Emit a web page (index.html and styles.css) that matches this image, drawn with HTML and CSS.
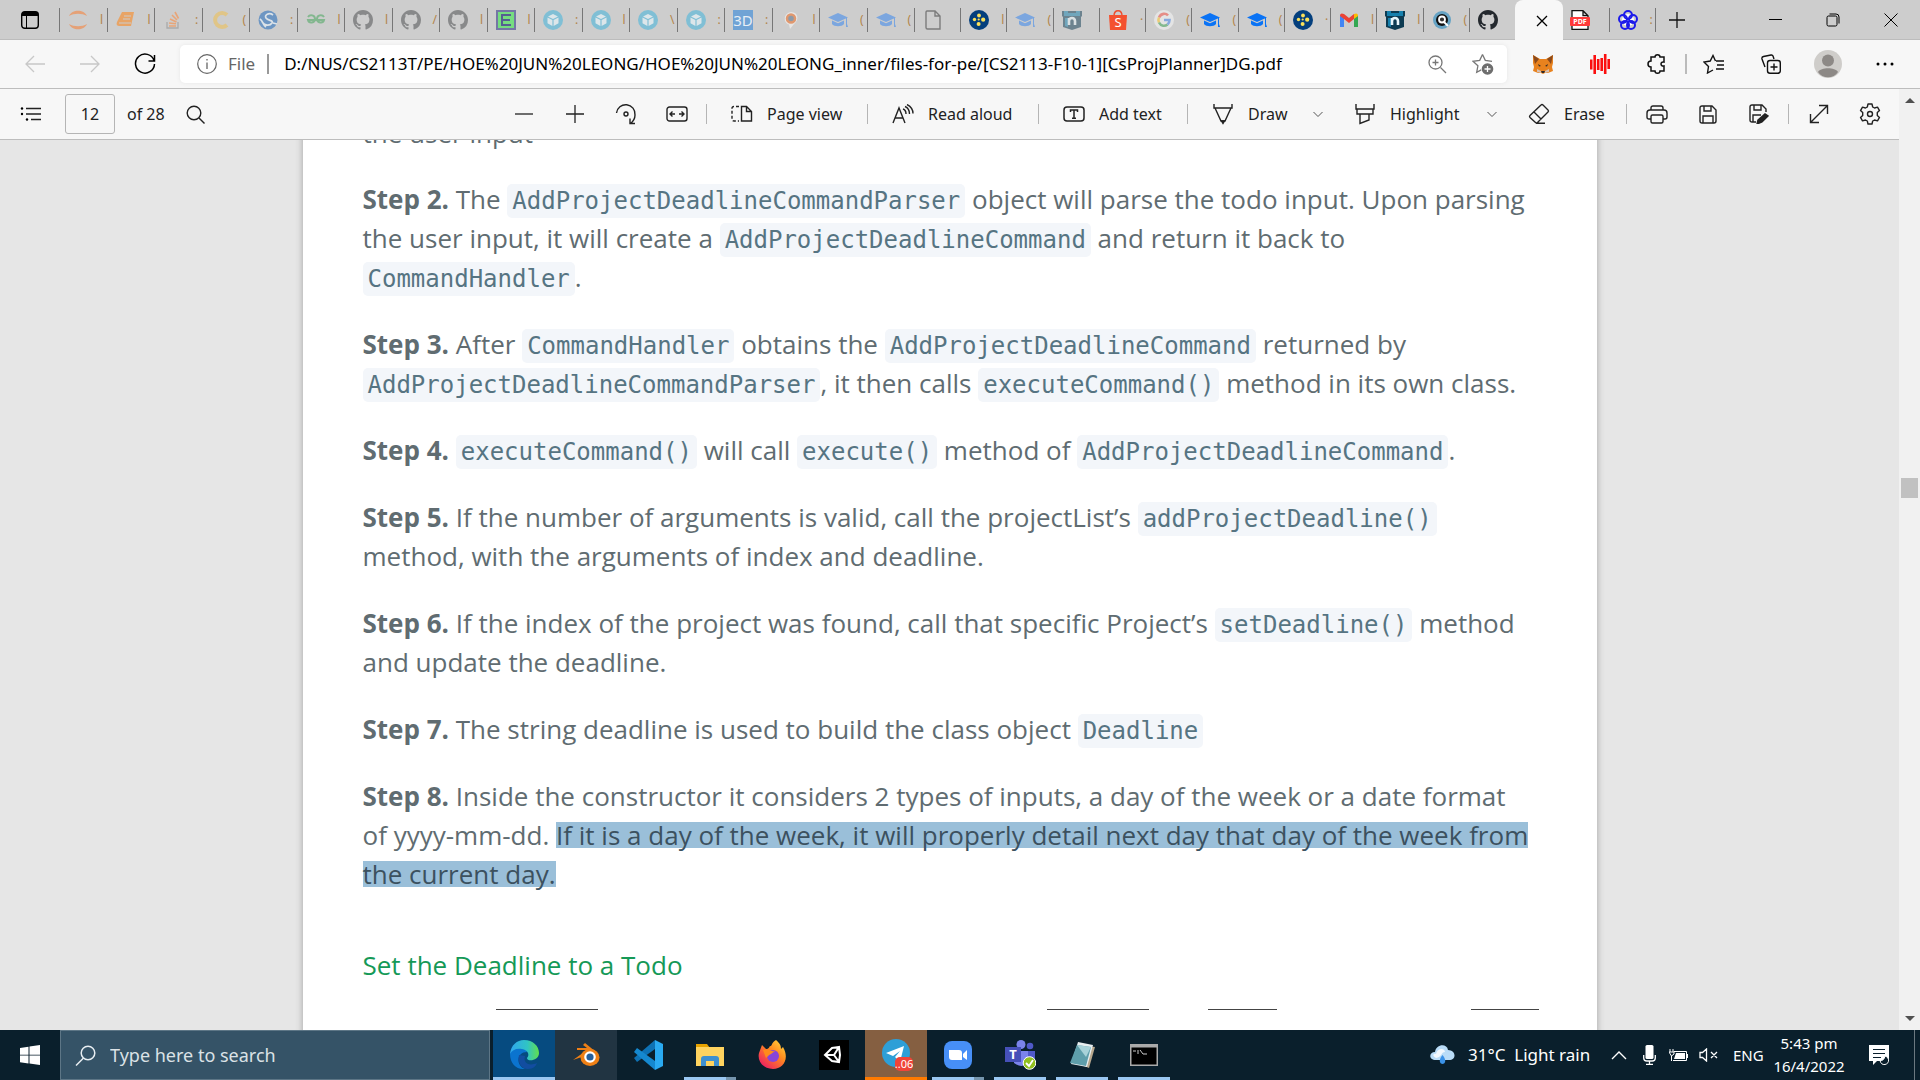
FILE: index.html
```html
<!DOCTYPE html>
<html lang="en">
<head>
<meta charset="utf-8">
<title>[CS2113-F10-1][CsProjPlanner]DG.pdf</title>
<link rel="stylesheet" href="styles.css">
</head>
<body>
<svg class="defs" aria-hidden="true">
  <symbol id="github" viewBox="0 0 16 16"><path fill="currentColor" d="M8 0C3.58 0 0 3.58 0 8c0 3.54 2.29 6.53 5.47 7.59.4.07.55-.17.55-.38 0-.19-.01-.82-.01-1.49-2.01.37-2.53-.49-2.69-.94-.09-.23-.48-.94-.82-1.13-.28-.15-.68-.52-.01-.53.63-.01 1.08.58 1.23.82.72 1.21 1.87.87 2.33.66.07-.52.28-.87.51-1.07-1.78-.2-3.64-.89-3.64-3.95 0-.87.31-1.59.82-2.15-.08-.2-.36-1.02.08-2.12 0 0 .67-.21 2.2.82.64-.18 1.32-.27 2-.27s1.36.09 2 .27c1.53-1.04 2.2-.82 2.2-.82.44 1.1.16 1.92.08 2.12.51.56.82 1.27.82 2.15 0 3.07-1.87 3.75-3.65 3.95.29.25.54.73.54 1.48 0 1.07-.01 1.93-.01 2.2 0 .21.15.46.55.38A8.01 8.01 0 0 0 16 8c0-4.42-3.58-8-8-8z"/></symbol>
  <symbol id="cube" viewBox="0 0 20 20"><circle cx="10" cy="10" r="10" fill="#80bfd5"/><path fill="#dce6ea" d="M10 4l5 2.500-5 2.600-5-2.600zM4.500 7.600L9.400 10v6l-4.900-2.700zM15.500 7.600L10.600 10v6l4.900-2.700z"/></symbol>
  <symbol id="cap" viewBox="0 0 20 20"><path fill="currentColor" d="M10 3l10 4.500-10 4.500L0 7.500zM4 10.500l6 2.700 6-2.700v3.500c-2 3-10 3-12 0zM18 8h1v6l1 3h-2z"/></symbol>
  <symbol id="dots" viewBox="0 0 20 20"><circle cx="10" cy="10" r="10" fill="#043f7d"/><g fill="#fbe15a"><circle cx="10" cy="5.500" r="1.900"/><circle cx="5.500" cy="9.500" r="1.700"/><circle cx="14.200" cy="9.700" r="2.100"/><circle cx="9.600" cy="14" r="2"/><circle cx="9.700" cy="9.500" r="1.100"/></g></symbol>
  <symbol id="nus" viewBox="0 0 20 20"><path fill="#0d3b52" d="M0 1h20v5l-1 1v10l-9 3-9-3V7L0 6z"/><path fill="#1680ad" d="M2 1h4v2h8V1h4v5H2zM3 8h3v9l-3-1z"/><path fill="none" stroke="#e8f5fa" stroke-width="2.600" d="M7 15V8M7 11c0-4 6-4 6 0v4"/></symbol>
  <symbol id="chevron" viewBox="0 0 12 12"><path d="M1.500 4L6 8.500 10.500 4" fill="none" stroke="currentColor"/></symbol>
</svg>

<header class="tabstrip">
  <button class="tab-actions" aria-label="Tab actions"><svg width="18" height="18" viewBox="0 0 18 18"><rect x=".7" y=".7" width="16.600" height="16.600" rx="3" fill="none" stroke="#000" stroke-width="1.400"/><path d="M1 1h16v4H1z"/><path d="M5.500 5v12" stroke="#000"/></svg></button>
  <div class="tabs tabs-sleeping">
    <div class="tab"><svg viewBox="0 0 20 20"><path fill="#e5a177" d="M1 6C4-1 16-1 19 6 14 3 6 3 1 6zM1 14c3 7 15 7 18 0-5 3-13 3-18 0z"/></svg><span>l</span></div>
    <div class="tab"><svg viewBox="0 0 20 20"><path fill="#e8a466" d="M6 2h12l-3 14H4c-3 0-4-1-3-4z"/><path stroke="#ccc" fill="none" d="M8 6h7M7 9h7M3 13h12"/></svg><span>l</span></div>
    <div class="tab"><svg viewBox="0 0 20 20"><path fill="none" stroke="#aaa" stroke-width="1.300" d="M4 12v6h11v-6"/><path stroke="#e8a578" stroke-width="1.600" d="M6 16h7M6 13l7 .8M7 9l6.500 3M9 5l5 5M12 2l3.500 6.500"/></svg><span>:</span></div>
    <div class="tab"><svg viewBox="0 0 20 20"><path d="M16 5a7 7 0 1 0 0 10" fill="none" stroke="#e0c587" stroke-width="4"/></svg><span>(</span></div>
    <div class="tab"><svg viewBox="0 0 20 20"><circle cx="10" cy="10" r="9.500" fill="#6d96c3"/><path d="M15 5c-4-3-9 0-7 3s8 2 6 5-7 3-10-1M2 9c3 2 3 6 6 8M15 13l4 1" fill="none" stroke="#dce3e8" stroke-width="1.700"/></svg><span>:</span></div>
    <div class="tab"><svg viewBox="0 0 20 20"><path d="M2 7c2-3 7-2 7 2s-6 5-7 1h16c-1 4-7 3-7-1s5-5 7-2" fill="none" stroke="#83b78f" stroke-width="2"/></svg><span>l</span></div>
    <div class="tab gray"><svg><use href="#github"/></svg><span>l</span></div>
    <div class="tab gray"><svg><use href="#github"/></svg><span>/</span></div>
    <div class="tab gray"><svg><use href="#github"/></svg><span>l</span></div>
    <div class="tab"><svg viewBox="0 0 20 20"><path fill="#7476a5" d="M0 0h20v20H0z"/><path fill="#76dd80" d="M2 2h16v16H2z"/><path d="M15 5H6v10h9M6 10h8" fill="none" stroke="#555f91" stroke-width="2"/></svg><span>l</span></div>
    <div class="tab"><svg><use href="#cube"/></svg><span>:</span></div>
    <div class="tab"><svg><use href="#cube"/></svg><span>l</span></div>
    <div class="tab"><svg><use href="#cube"/></svg><span>\</span></div>
    <div class="tab"><svg><use href="#cube"/></svg><span>:</span></div>
    <div class="tab"><svg viewBox="0 0 20 20"><path fill="#70a3d5" d="M0 0h20v20H0z"/><text x="10" y="16" text-anchor="middle" font-size="15" fill="#e7eef5">3D</text></svg><span>:</span></div>
    <div class="tab"><svg viewBox="0 0 20 20"><path fill="#e8e6e4" d="M10 2c8 0 8 9 3 12l-4 5-1-4.500C2 13 2 3 10 2z"/><circle cx="10" cy="8.500" r="4" fill="#8d9aa8" stroke="#e0986f" stroke-width="2.500"/></svg><span>l</span></div>
    <div class="tab cap-faded"><svg><use href="#cap"/></svg><span>(</span></div>
    <div class="tab cap-faded"><svg><use href="#cap"/></svg><span>(</span></div>
  </div>
  <div class="tabs tabs-recent">
    <div class="tab"><svg viewBox="0 0 20 20"><path d="M4 1h8l5 5v13H4.500Q3 19 3 17.500v-15Q3 1 4 1zM12 1v5h5" fill="none" stroke="#7c7c7c" stroke-width="1.400"/></svg></div>
    <div class="tab"><svg><use href="#dots"/></svg><span>l</span></div>
    <div class="tab cap-faded"><svg><use href="#cap"/></svg><span>(</span></div>
    <div class="tab faded"><svg><use href="#nus"/></svg></div>
    <div class="tab"><svg viewBox="0 0 20 20"><path d="M6 6c0-7 8-7 8 0" fill="none" stroke="#ee4d2d" stroke-width="1.400"/><path fill="#f4512f" d="M1 5h18l-1 15H2z"/><text x="10" y="17" text-anchor="middle" font-size="13" fill="#fff">S</text></svg><span>·</span></div>
    <div class="tab"><svg viewBox="0 0 20 20"><circle cx="10" cy="10" r="10" fill="#e4e4e4"/><g fill="none" stroke-width="2.600"><path stroke="#e58d87" d="M5 7.500c2-4.500 7-4.500 9-2"/><path stroke="#ebcb75" d="M5 12.500c-1-2-1-3 0-5"/><path stroke="#83b98f" d="M5 12.500c2 4 6 4 8.500 2"/><path stroke="#86a9df" d="M10 10h5.500c0 2-.7 3.500-2 4.500"/></g></svg><span>(</span></div>
    <div class="tab cap-blue"><svg><use href="#cap"/></svg><span>(</span></div>
    <div class="tab cap-blue"><svg><use href="#cap"/></svg><span>(</span></div>
    <div class="tab"><svg><use href="#dots"/></svg><span>·</span></div>
    <div class="tab"><svg viewBox="0 0 20 20"><path fill="#4285f4" d="M1 17V5l4 3v9z"/><path fill="#34a853" d="M15 17V8l4-3v12z"/><path fill="#ea4335" d="M1 6c0-3 2-3 4-2l5 4 5-4v5l-5 4-5-4z"/><path fill="#fbbc04" d="M15 4c2-1 4-1 4 2l-4 3z"/></svg><span>l</span></div>
    <div class="tab"><svg><use href="#nus"/></svg><span>l</span></div>
    <div class="tab"><svg viewBox="0 0 20 20"><circle cx="10" cy="10" r="9" fill="#66a3c4"/><circle cx="10" cy="10" r="6" fill="#111"/><circle cx="10" cy="9.500" r="3" fill="#333" stroke="#fff" stroke-width="1.800"/><path d="M12 12l4 4" stroke="#fff" stroke-width="2"/></svg><span>(</span></div>
    <div class="tab dark"><svg><use href="#github"/></svg></div>
  </div>
  <div class="tab-active"><button aria-label="Close tab"><svg width="12" height="12" viewBox="0 0 12 12"><path d="M1 1l10 10M11 1L1 11" stroke="#000" stroke-width="1.300"/></svg></button></div>
  <div class="tabs tabs-last">
    <div class="tab first"><svg viewBox="0 0 20 20"><path d="M2 .7h11l5 5V19.300H2zM13 .7v5h5" fill="#fff" stroke="#111" stroke-width="1.300"/><rect x="0" y="7" width="20" height="9" rx="1" fill="#ff3a3a"/><text x="10" y="14" text-anchor="middle" font-size="7" font-weight="700" fill="#fff">PDF</text></svg></div>
    <div class="tab"><svg viewBox="0 0 20 20"><circle cx="10" cy="10" r="6" fill="#fff"/><g fill="none" stroke="#1d1bea" stroke-width="2"><circle cx="10" cy="5" r="4"/><circle cx="15" cy="9" r="4"/><circle cx="13" cy="15" r="4"/><circle cx="7" cy="15" r="4"/><circle cx="5" cy="9" r="4"/></g></svg><span>:</span></div>
  </div>
  <button class="new-tab" aria-label="New tab"><svg width="18" height="18" viewBox="0 0 18 18"><path d="M9 1v16M1 9h16" stroke="#111" stroke-width="1.300"/></svg></button>
  <div class="window-controls">
    <button aria-label="Minimize"><svg width="13" height="13" viewBox="0 0 13 13"><path d="M0 6.500h13" stroke="#000"/></svg></button>
    <button aria-label="Restore"><svg width="14" height="14" viewBox="0 0 14 14" fill="none" stroke="#000"><rect x="1" y="3" width="10" height="10" rx="1.500"/><path d="M3.500 1h6.500q3 0 3 3v6.500"/></svg></button>
    <button aria-label="Close"><svg width="14" height="14" viewBox="0 0 14 14"><path d="M.5 .5l13 13M13.500 .5l-13 13" stroke="#000"/></svg></button>
  </div>
</header>

<nav class="address-bar">
  <button class="nav-btn" aria-label="Back"><svg width="20" height="18" viewBox="0 0 20 18" fill="none" stroke="#c8c8c8" stroke-width="1.300"><path d="M20 9H1M9 1L1 9l8 8"/></svg></button>
  <button class="nav-btn" aria-label="Forward"><svg width="20" height="18" viewBox="0 0 20 18" fill="none" stroke="#c8c8c8" stroke-width="1.300"><path d="M0 9h19M11 1l8 8-8 8"/></svg></button>
  <button class="nav-btn" aria-label="Refresh"><svg width="22" height="22" viewBox="0 0 22 22" fill="none" stroke="#000" stroke-width="1.500"><path d="M20 7.500A9.500 9.500 0 1 0 20.500 11M20.500 2v6h-6"/></svg></button>
  <div class="omnibox">
    <svg class="info" width="20" height="20" viewBox="0 0 20 20"><circle cx="10" cy="10" r="9.300" fill="none" stroke="#666" stroke-width="1.200"/><path d="M10 8.500V15M10 5v1.500" stroke="#666" stroke-width="1.300"/></svg>
    <span class="scheme">File</span>
    <input class="url" aria-label="Address" value="D:/NUS/CS2113T/PE/HOE%20JUN%20LEONG/HOE%20JUN%20LEONG_inner/files-for-pe/[CS2113-F10-1][CsProjPlanner]DG.pdf">
    <button class="omni-btn" aria-label="Zoom"><svg width="19" height="19" viewBox="0 0 19 19" fill="none" stroke="#777" stroke-width="1.300"><circle cx="7.500" cy="7.500" r="6.500"/><path d="M12.500 12.500l5.500 5.500M7.500 4.500v6M4.500 7.500h6"/></svg></button>
    <button class="omni-btn" aria-label="Add to favorites"><svg width="22" height="22" viewBox="0 0 22 22"><path d="M10.500 1.500l2.800 5.800 6.700 1M10.500 1.500L7.700 7.300l-6.700 1 4.900 4.500-1.200 6.500 4.500-2.400" fill="none" stroke="#777" stroke-width="1.300"/><circle cx="15.500" cy="16" r="5.800" fill="#6e6e6e"/><path d="M15.500 13v6M12.500 16h6" stroke="#fff" stroke-width="1.300"/></svg></button>
  </div>
  <div class="extensions">
    <button class="ext" aria-label="MetaMask"><svg width="22" height="20" viewBox="0 0 22 20"><path fill="#e8821e" d="M1 1l7 4h6l7-4v8l-1 4 1 4-5 2h-3l-2 1-2-1H6l-5-2 1-4-1-4z"/><path fill="#8b4a1c" d="M1 1l6 4-4 5zM21 1l-6 4 4 5z"/><path fill="#2e2a2a" d="M6 10l3 2-2 .5zM16 10l-3 2 2 .5zM9 17h4l-1 2h-2z"/><path fill="#d5bfb2" d="M5 15l4 2v2l-4-1zM17 15l-4 2v2l4-1z"/></svg></button>
    <button class="ext" aria-label="Audio"><svg width="20" height="20" viewBox="0 0 20 20"><path d="M1.200 5.500v10M4.700 1v19M8.200 5v11M11.700 4v13M15.200 0v20M18.700 5v10" stroke="#fb0f0f" stroke-width="2.600"/></svg></button>
    <button class="ext" aria-label="Extensions"><svg width="20" height="20" viewBox="0 0 20 20"><path d="M4 3h4c0-3 5-3 5 0h4v5c-4-1-4 5 0 4v5h-4c0 3-5 3-5 0H4v-4C0 13 0 7 4 7z" fill="none" stroke="#111" stroke-width="1.500"/></svg></button>
    <button class="ext after-rule" aria-label="Favorites"><svg width="22" height="20" viewBox="0 0 22 20" fill="none" stroke="#111" stroke-width="1.400"><path d="M12.500 7L10 1.500 7.200 7 1 8l4.500 4.500L4.500 19l5.500-3M13 7h8M14 11h7M13 15h8"/></svg></button>
    <button class="ext" aria-label="Collections"><svg width="20" height="20" viewBox="0 0 20 20" fill="none" stroke="#111" stroke-width="1.400"><path d="M4 13L1 5Q.5 3 2.500 2.500L10 1q1.500-.3 2 1l1 3"/><rect x="6.500" y="6.500" width="12.800" height="12.800" rx="2.500"/><path d="M13 9.500v7M9.500 13h7"/></svg></button>
    <button class="ext" aria-label="Profile"><svg width="28" height="28" viewBox="0 0 28 28"><circle cx="14" cy="14" r="14" fill="#cfcdca"/><circle cx="14" cy="10.500" r="6" fill="#8d8986"/><path fill="#8d8986" d="M4 22c3-5 17-5 20 0-4 7-16 7-20 0z"/></svg></button>
    <button class="ext" aria-label="Settings and more"><svg width="18" height="4" viewBox="0 0 18 4"><circle cx="2" cy="2" r="1.500"/><circle cx="9" cy="2" r="1.500"/><circle cx="16" cy="2" r="1.500"/></svg></button>
  </div>
</nav>

<div class="window-body">
  <div class="reader">
    <div class="pdf-toolbar">
      <div class="tools tools-left">
        <button class="icon-btn" aria-label="Contents"><svg width="22" height="16" viewBox="0 0 22 16"><path d="M6 2.500h15M6 8h15M11 13.500h10" stroke="#222" stroke-width="1.400"/><circle cx="2" cy="2.500" r="1.200"/><circle cx="2" cy="8" r="1.200"/><circle cx="7" cy="13.500" r="1.200"/></svg></button>
        <input class="page-number" id="page" value="12"><label for="page">of 28</label>
        <button class="icon-btn find" aria-label="Find"><svg width="19" height="19" viewBox="0 0 19 19" fill="none" stroke="#222" stroke-width="1.400"><circle cx="8" cy="8" r="6.800"/><path d="M13 13l5.500 5.500"/></svg></button>
      </div>
      <div class="tools tools-main">
        <button class="icon-btn" aria-label="Zoom out"><svg width="18" height="18" viewBox="0 0 18 18"><path d="M0 9h18" stroke="#222" stroke-width="1.300"/></svg></button>
        <button class="icon-btn" aria-label="Zoom in"><svg width="18" height="18" viewBox="0 0 18 18"><path d="M0 9h18M9 0v18" stroke="#222" stroke-width="1.300"/></svg></button>
        <button class="icon-btn" aria-label="Rotate"><svg width="22" height="22" viewBox="0 0 22 22" fill="none" stroke="#222" stroke-width="1.400"><path d="M1.500 10a9.300 9.300 0 0 1 18.500 2q0 5-4.500 8.500M20 20.500h-5v-5"/><circle cx="11" cy="11" r="2"/></svg></button>
        <button class="icon-btn" aria-label="Fit to width"><svg width="22" height="16" viewBox="0 0 22 16" fill="none" stroke="#222" stroke-width="1.400"><rect x="1" y="1" width="20" height="14" rx="2.500"/><path d="M4 8h5M13 8h5M6.500 5.500L4 8l2.500 2.500M15.500 5.500L18 8l-2.500 2.500"/></svg></button>
        <span class="rule"></span>
        <button class="tool page-view"><svg width="22" height="18" viewBox="0 0 22 18" fill="none" stroke="#222" stroke-width="1.400"><path d="M10.500 1.500h5l5 5v9.500h-10zM15.500 1.500v5h5"/><path stroke-dasharray="3 2" d="M8 1.500H3q-2 0-2 2V14q0 2 2 2h5"/></svg>Page view</button>
        <span class="rule"></span>
        <button class="tool read"><svg width="22" height="20" viewBox="0 0 22 20" fill="none" stroke="#222" stroke-width="1.400"><path d="M1 19L7 4l6 15M3 14h8M11 5q3 1 3 5M13 2.500q4.500 2 4.500 7.500M15 .5q6 3 6 9"/></svg>Read aloud</button>
        <span class="rule"></span>
        <button class="tool add-text"><svg width="22" height="16" viewBox="0 0 22 16" fill="none" stroke="#222" stroke-width="1.500"><rect x="1" y="1" width="20" height="14" rx="3"/><path d="M7.500 6V4h7v2M11 4v8M9 12.300h4"/></svg>Add text</button>
        <span class="rule"></span>
        <button class="tool draw"><svg width="22" height="22" viewBox="0 0 22 22" fill="none" stroke="#222" stroke-width="1.400"><path d="M2 1v4h18V1M3 5l6 13h4l6-13"/><path fill="#222" d="M9.500 18h3L11 20.500z"/></svg>Draw</button>
        <button class="more" aria-label="Draw options"><svg width="12" height="12"><use href="#chevron"/></svg></button>
        <button class="tool highlight"><svg width="22" height="22" viewBox="0 0 22 22" fill="none" stroke="#222" stroke-width="1.400"><path d="M2 1v5h18V1M3 6v5h16V6M6 11v9.500l9-3.500v-6"/></svg>Highlight</button>
        <button class="more" aria-label="Highlight options"><svg width="12" height="12"><use href="#chevron"/></svg></button>
        <button class="tool erase"><svg width="22" height="22" viewBox="0 0 22 22" fill="none" stroke="#222" stroke-width="1.400"><path d="M13 2q1-1 2 0l5 5q1 1 0 2L9.500 19.500q-1 1-2 0l-5.500-5q-1-1 0-2zM6 9l7 7M8 20.300h9"/></svg>Erase</button>
        <span class="rule"></span>
        <button class="icon-btn" aria-label="Print"><svg width="22" height="19" viewBox="0 0 22 19" fill="none" stroke="#222" stroke-width="1.400"><path d="M5 5V3q0-2 2-2h8q2 0 2 2v2M5 14H3q-2 0-2-2V8q0-3 3-3h14q3 0 3 3v4q0 2-2 2h-2"/><rect x="5" y="10" width="12" height="8" rx="1.500"/></svg></button>
        <button class="icon-btn" aria-label="Save"><svg width="18" height="19" viewBox="0 0 18 19" fill="none" stroke="#222" stroke-width="1.400"><path d="M3 1h10l4 4v11q0 2-2 2H3q-2 0-2-2V3q0-2 2-2zM5 1v5h7V1M4 18v-7h10v7"/></svg></button>
        <button class="icon-btn" aria-label="Save as"><svg width="20" height="20" viewBox="0 0 20 20" fill="none" stroke="#222" stroke-width="1.400"><path d="M7 18H3q-2 0-2-2V3q0-2 2-2h10l4 4v3M5 1v5h7V1M4 18v-7h8"/><path fill="#222" d="M9 16l7-6 3 2-6 6-5 2z"/></svg></button>
        <span class="rule"></span>
        <button class="icon-btn" aria-label="Full screen"><svg width="20" height="20" viewBox="0 0 20 20" fill="none" stroke="#222" stroke-width="1.400"><path d="M1.500 18.500l17-17M10 1.500h8.500V10M1.500 10v8.500H10"/></svg></button>
        <button class="icon-btn" aria-label="Settings"><svg width="22" height="22" viewBox="0 0 22 22" fill="none" stroke="#222" stroke-width="1.400" stroke-linejoin="round"><path d="M9 1h4l.7 3 1.800 1 3-.9 2 3.500-2.200 2v2.800l2.200 2-2 3.500-3-.9-1.800 1L13 21H9l-.7-3-1.800-1-3 .9-2-3.500 2.200-2V9.600l-2.200-2 2-3.500 3 .9 1.800-1z"/><circle cx="11" cy="11" r="2.500"/></svg></button>
      </div>
    </div>
    <main class="viewer">
      <article class="page">
        <p>the user input</p>
        <p><strong>Step 2.</strong> The <code>AddProjectDeadlineCommandParser</code> object will parse the todo input. Upon parsing<br>the user input, it will create a <code>AddProjectDeadlineCommand</code> and return it back to<br><code>CommandHandler</code>.</p>
        <p><strong>Step 3.</strong> After <code>CommandHandler</code> obtains the <code>AddProjectDeadlineCommand</code> returned by<br><code>AddProjectDeadlineCommandParser</code>, it then calls <code>executeCommand()</code> method in its own class.</p>
        <p><strong>Step 4.</strong> <code>executeCommand()</code> will call <code>execute()</code> method of <code>AddProjectDeadlineCommand</code>.</p>
        <p><strong>Step 5.</strong> If the number of arguments is valid, call the projectList’s <code>addProjectDeadline()</code><br>method, with the arguments of index and deadline.</p>
        <p><strong>Step 6.</strong> If the index of the project was found, call that specific Project’s <code>setDeadline()</code> method<br>and update the deadline.</p>
        <p><strong>Step 7.</strong> The string deadline is used to build the class object <code>Deadline</code></p>
        <p><strong>Step 8.</strong> Inside the constructor it considers 2 types of inputs, a day of the week or a date format<br>of yyyy-mm-dd. <mark>If it is a day of the week, it will properly detail next day that day of the week from<br>the current day.</mark></p>
        <h3>Set the Deadline to a Todo</h3>
        <svg class="diagram" viewBox="0 0 1177 60" width="1177" height="60" fill="none" stroke="#444"><path d="M133 .5h102M684 .5h102M845 .5h69M1108 .5h68"/></svg>
      </article>
    </main>
  </div>
  <div class="scrollbar">
    <svg width="10" height="6" viewBox="0 0 10 6"><path fill="#505050" d="M0 6l5-5 5 5z"/></svg>
    <div class="track"><div class="thumb"></div></div>
    <svg width="10" height="6" viewBox="0 0 10 6"><path fill="#505050" d="M0 0l5 5 5-5z"/></svg>
  </div>
</div>

<footer class="taskbar">
  <button class="start" aria-label="Start"><svg width="20" height="20" viewBox="0 0 20 20" fill="#fff"><path d="M0 3l8.500-1.300v8H0zM9.500 1.500L20 0v9.700H9.500zM0 10.500h8.500v8L0 17.200zM9.500 10.500H20V20L9.500 18.600z"/></svg></button>
  <label class="search"><svg width="21" height="21" viewBox="0 0 21 21" fill="none" stroke="#e8eef2" stroke-width="1.500"><circle cx="13" cy="8" r="6.800"/><path d="M8.500 13L1 20.500"/></svg><input placeholder="Type here to search" aria-label="Search"></label>
  <div class="apps">
    <button class="app edge active" aria-label="Edge"><svg width="30" height="30" viewBox="0 0 30 30"><defs><linearGradient id="eg" x1="0" x2="1"><stop offset="0" stop-color="#2fa5ef"/><stop offset=".6" stop-color="#30c4c4"/><stop offset="1" stop-color="#62e04c"/></linearGradient></defs><path fill="#0b74cf" d="M1 14c0 9 6 16 15 15-9-3-9-17 2-17C14 4 3 5 1 14z"/><path fill="#124da0" d="M10 15c-2 8 3 14 9 14 5 0 8-3 9-6-9 4-14-1-12-7z"/><path fill="url(#eg)" d="M1 14C2 5 8 0 15 0c9 0 15 6 15 13 0 8-12 9-12 5 3-3 1-8-5-9C7 8 3 10 1 14z"/></svg></button>
    <button class="app blender" aria-label="Blender"><svg width="28" height="24" viewBox="0 0 28 24"><path d="M1 17L15 7H5V5h10l-4-3 2-2 11 9" fill="#ef8016"/><ellipse cx="18" cy="14.500" rx="9.500" ry="8.500" fill="#ef8016"/><circle cx="18" cy="14" r="5.800" fill="#fff"/><circle cx="18" cy="14" r="3.600" fill="#26609e"/></svg></button>
    <button class="app" aria-label="Visual Studio Code"><svg width="30" height="30" viewBox="0 0 30 30"><path fill="#0e72b5" d="M22 0L1 18l3 4L22 9z"/><path fill="#1588cf" d="M22 30L1 12l3-4 18 13z"/><path fill="#2aaaf2" d="M22 0l8 4v22l-8 4z"/></svg></button>
    <button class="app open stacked" aria-label="File Explorer"><svg width="28" height="24" viewBox="0 0 28 24"><path fill="#e7a200" d="M0 1h11l3 4H0z"/><path fill="#ffd35f" d="M0 4h28v19H0z"/><path fill="#3e90d0" d="M5 23v-7q0-3 3-3h12q3 0 3 3v7h-5v-5h-8v5z"/></svg></button>
    <button class="app" aria-label="Firefox"><svg width="29" height="30" viewBox="0 0 29 30"><defs><linearGradient id="ff" x1="1" y1="0" x2=".2" y2="1"><stop offset="0" stop-color="#ffe142"/><stop offset=".45" stop-color="#ff8a1f"/><stop offset="1" stop-color="#ed1a65"/></linearGradient></defs><path fill="url(#ff)" d="M18 0c4 4 5 5 5 9l2-2c7 12 0 22-10 22S-1 21 1 13l3-8 4 4c3 0 3-2 4-3 2 1 1-3 6-6z"/><circle cx="15" cy="16" r="6" fill="#8745d8"/><path fill="#ff8b1b" d="M5 10c5-2 8 2 12 1l-4 3c-3 1-3 3-5 4z"/></svg></button>
    <button class="app" aria-label="Unity"><svg width="30" height="30" viewBox="0 0 30 30"><path d="M0 0h30v30H0z"/><path d="M20 7l-7 1-7 7 7 6 7 1 1-7zM6 15h9l5-8M15 15l5 7" fill="none" stroke="#fff" stroke-width="2"/></svg></button>
    <button class="app alert" aria-label="Telegram"><svg width="34" height="32" viewBox="0 0 34 32"><circle cx="17" cy="14" r="14" fill="#2e9fd7"/><path fill="#fff" d="M7 14l18-7-4 16-5-5 5-6-7 5z"/><rect x="16" y="18" width="18" height="14" rx="5" fill="#f04438"/><text x="25" y="29" text-anchor="middle" font-size="11" fill="#fff">..06</text></svg></button>
    <button class="app open stacked" aria-label="Zoom"><svg width="28" height="28" viewBox="0 0 28 28"><rect width="28" height="28" rx="8" fill="#478ff7"/><path fill="#fff" d="M5 9h10q3 0 3 3v7H8q-3 0-3-3zM19 13l4-4v10l-4-3z"/></svg></button>
    <button class="app open" aria-label="Teams"><svg width="31" height="30" viewBox="0 0 31 30"><circle cx="16" cy="4.500" r="4.500" fill="#7b83eb"/><circle cx="25" cy="6" r="3.300" fill="#5059c9"/><path fill="#7b83eb" d="M9 11h14v12q-6 6-14 0z"/><path fill="#5059c9" d="M23 11h7v9q-3 5-7 2z"/><path fill="#4650b8" d="M0 7h16v15H0z"/><text x="8" y="19" text-anchor="middle" font-size="13" font-weight="700" fill="#fff">T</text><circle cx="24.500" cy="23" r="6.300" fill="#92c01e" stroke="#fff"/><path d="M21 23l3 3 4-6" fill="none" stroke="#fff" stroke-width="1.800"/></svg></button>
    <button class="app open" aria-label="Notepad"><svg width="28" height="28" viewBox="0 0 28 28"><path fill="#b8a88e" d="M12 4l15 2-6 21-5-2z"/><path fill="#e8eef0" d="M10 1l15 3-6 22-16-3z"/><path fill="#5e9eab" d="M9 4l14 2-5 19-16-3z"/><path fill="#a8d2d9" d="M9 4l14 2-5 10z"/></svg></button>
    <button class="app open" aria-label="Command Prompt"><svg width="28" height="24" viewBox="0 0 28 24"><path fill="#aaa" d="M0 1h28v22H0z"/><path d="M1.500 4.500h25v17h-25z"/><path d="M3 8h3M8 7v4M10 7l3 4h4" stroke="#ccc" fill="none"/></svg></button>
  </div>
  <div class="tray">
    <button class="weather"><svg width="25" height="20" viewBox="0 0 25 20"><path fill="#b9dcf8" d="M6 15C-2 15-1 7 5 7 6-1 17-2 18 5c8 0 9 10 1 10z"/><path fill="#f2f8fe" d="M6 13c-4-2-3-5 0-4 1-5 8-7 9-2-4 0-3 5-9 6z"/><path fill="#3b92e8" d="M12.500 10c5 6 2 9 0 9s-5-3 0-9z"/></svg><span>31°C&nbsp; Light rain</span></button>
    <button aria-label="Hidden icons"><svg width="16" height="9" viewBox="0 0 16 9"><path d="M1 8l7-7 7 7" fill="none" stroke="#fff" stroke-width="1.400"/></svg></button>
    <button aria-label="Microphone"><svg width="13" height="20" viewBox="0 0 13 20"><rect x="2.500" width="8" height="14" rx="1.500" fill="#fff"/><path d="M.7 10v3q0 3 3 3h5.600q3 0 3-3v-3M6.500 16v3M3 19.300h7" fill="none" stroke="#fff" stroke-width="1.300"/></svg></button>
    <button aria-label="Battery"><svg width="20" height="15" viewBox="0 0 20 15"><path fill="#fff" d="M7 5h9v6H5z"/><path d="M5 3.500h12.500v9H4M18.500 6v4M1 1v3M4 1v3M0 4h5v2L2.500 8zM2.500 8v5" fill="none" stroke="#fff"/></svg></button>
    <button aria-label="Volume muted"><svg width="20" height="14" viewBox="0 0 20 14" fill="none" stroke="#fff" stroke-width="1.300"><path d="M1 4.500h2.500L7.500 1v12L3.500 9.500H1zM12 4l6 6M18 4l-6 6"/></svg></button>
    <span class="lang">ENG</span>
    <div class="clock"><time>5:43 pm</time><time>16/4/2022</time></div>
    <button class="notices" aria-label="Notifications"><svg width="21" height="21" viewBox="0 0 21 21"><path fill="#fff" d="M0 0h20v16H8l-4 4v-4H0z"/><path d="M4 4.500h12M4 8.500h12M4 12.500h8" stroke="#0a1f2c"/><path d="M16 11q-1 5-5 4.500 1 4.500 5 4 4-1 3.500-5-.5-3-3.500-3.500z" fill="#0a1f2c" stroke="#fff"/></svg></button>
  </div>
</footer>
</body>
</html>
```
FILE: styles.css
```css
* { box-sizing: border-box; }

body {
  margin: 0;
  height: 100vh;
  display: flex;
  flex-direction: column;
  overflow: hidden;
  font: 16px/24px "Noto Sans", "Open Sans", sans-serif;
  color: #222;
  background: #f7f7f7;
}

button, input {
  font: inherit;
  color: inherit;
  border: 0;
  padding: 0;
  margin: 0;
  background: none;
}

svg { display: block; flex: none; }
.defs { position: absolute; width: 0; height: 0; }

/* Tab strip */
.tabstrip {
  display: flex;
  flex: none;
  height: 40px;
  background: #cdcdcd;
  border-bottom: 1px solid #bcbcbc;
}
.tab-actions { flex: none; width: 59px; display: grid; place-items: center; }
.tabs { display: flex; min-width: 0; }
.tabs-sleeping { flex: 0 1 855px; }
.tabs-recent { flex: 0 1 601px; }
.tabs-last { flex: 0 0 93px; }
.tab {
  flex: 1 1 0;
  min-width: 0;
  display: flex;
  align-items: center;
  gap: 12px;
  height: 24px;
  margin-top: 8px;
  padding-left: 8px;
  border-left: 1px solid #777;
}
.tab svg { width: 20px; height: 20px; }
.tab span { color: #b28449; font-size: 12px; }
.tab.first { border-left-color: transparent; padding-left: 6px; }
.tabs-last { background: linear-gradient(#777, #777) right 8px / 1px 24px no-repeat; }
.gray { color: #88898a; }
.dark { color: #24292e; }
.cap-faded { color: #7ba6df; }
.cap-blue { color: #0a73f5; }
.faded svg { opacity: 0.5; }
.tab-active {
  flex: none;
  width: 48px;
  height: 41px;
  border-radius: 8px 8px 0 0;
  background: #f7f7f7;
  display: flex;
  align-items: center;
  padding-left: 21px;
}
.new-tab { margin-left: 12px; flex: none; display: grid; place-items: center; width: 18px; }
.window-controls { margin-left: auto; display: flex; }
.window-controls button { width: 58px; display: grid; place-items: center; }

/* Address bar */
.address-bar {
  display: flex;
  flex: none;
  align-items: center;
  height: 49px;
  padding-left: 7px;
  border-bottom: 1px solid #bdbdbd;
  background: #f7f7f7;
}
.nav-btn { width: 55px; display: grid; place-items: center; }
.omnibox {
  flex: 1;
  display: flex;
  align-items: center;
  height: 38px;
  margin-left: 8px;
  padding: 0 13px 0 17px;
  border-radius: 5px;
  background: #fff;
  box-shadow: 0 0 4px #e6e6e6;
}
.scheme { margin-left: 11px; padding-right: 12px; border-right: 2px solid #999; line-height: 20px; color: #666; font-size: 17px; }
.url { flex: 1; min-width: 0; margin-left: 15px; color: #000; font-size: 17px; }
.omni-btn { width: 45px; display: grid; place-items: center; }
.omni-btn:last-child { width: 22px; margin-left: 12px; }
.extensions { display: flex; align-items: center; padding: 0 7px; }
.ext { width: 57px; height: 28px; display: grid; place-items: center; }
.after-rule { position: relative; }
.after-rule::before { content: ""; position: absolute; left: 0; top: 4px; width: 2px; height: 20px; background: #bbb; }

/* Reader */
.window-body { flex: 1; min-height: 0; display: flex; }
.reader { flex: 1; min-width: 0; display: flex; flex-direction: column; }
.pdf-toolbar {
  display: flex;
  flex: none;
  align-items: center;
  justify-content: space-between;
  height: 51px;
  border-bottom: 1px solid #bdbdbd;
  background: #f7f7f7;
}
.tools { display: flex; align-items: center; }
.tools-left { padding-left: 5px; }
.tools-main { padding-right: 4px; }
.icon-btn { width: 51px; height: 24px; display: grid; place-items: center; }
.page-number { width: 50px; height: 40px; margin: 0 12px 0 9px; text-align: center; border: 1px solid #b5b5b5; border-radius: 3px; }
.find { width: 62px; }
.rule { width: 1px; height: 20px; background: #b5b5b5; margin: 0 4px; }
.tool { display: flex; align-items: center; gap: 14px; padding-left: 20px; white-space: nowrap; }
.page-view { width: 152px; }
.read { width: 162px; }
.add-text { width: 140px; }
.draw { width: 110px; }
.more { width: 32px; display: grid; place-items: center; color: #555; }
.highlight { width: 142px; }
.erase { width: 114px; }

.viewer { flex: 1; min-height: 0; overflow: hidden; background: #e6e6e6; }
.page {
  width: 1294px;
  max-width: 100%;
  margin: 0 auto;
  padding: 0 58px 0 60px;
  background: #fff;
  box-shadow: 0 0 6px 1px #b0b0b0;
  font: 26px/39px "Open Sans", sans-serif;
  color: #606c71;
}
.page p { margin: 0 0 28px; white-space: nowrap; }
.page p:first-child { margin-top: -26px; margin-bottom: 27px; }
.page code {
  padding: 3px 5px;
  border-radius: 5px;
  background: #f3f6fa;
  color: #567482;
  font: 24px/28px "DejaVu Sans Mono", monospace;
}
.page mark {
  color: #3c515f;
  background: linear-gradient(#9abfd9, #9abfd9) 0 5px / 100% 26px no-repeat;
  -webkit-box-decoration-break: clone;
  box-decoration-break: clone;
}
.page h3 { margin: 52px 0 24px; font-size: 26px; font-weight: 400; color: #159957; }

.scrollbar {
  flex: none;
  width: 21px;
  display: flex;
  flex-direction: column;
  align-items: center;
  padding: 8px 0;
  background: #f1f1f1;
}
.track { flex: 1; width: 17px; padding-top: 375px; }
.thumb { height: 20px; background: #c1c1c1; }

/* Taskbar */
.taskbar { flex: none; display: flex; height: 50px; background: #0a1f2c; color: #fff; }
.start { width: 60px; display: grid; place-items: center; }
.search {
  flex: 0 1 430px;
  display: flex;
  align-items: center;
  gap: 14px;
  padding-left: 14px;
  background: #355367;
  border: 1px solid #5d7686;
}
.search input { flex: 1; min-width: 0; font-size: 18px; }
.search input::placeholder { color: #dbe2e6; opacity: 1; }
.apps { display: flex; margin-left: 3px; }
.app { position: relative; width: 62px; display: grid; place-items: center; }
.app.edge { background: #064b80; }
.app.blender { background: #213442; }
.app.alert { background: #855f41; }
.app.open::after, .app.edge::after, .app.alert::after {
  content: "";
  position: absolute;
  bottom: 0;
  left: 5px;
  right: 5px;
  height: 3px;
  background: #9ac7f2;
}
.app.edge::after { left: 0; right: 0; }
.app.alert::after { left: 0; right: 0; background: #ff7a00; }
.app.stacked::after { background: linear-gradient(90deg, #9ac7f2 80%, #7595ae 80%); }
.tray { display: flex; align-items: center; margin-left: auto; padding-right: 5px; }
.tray button { width: 30px; display: grid; place-items: center; }
.tray .weather { width: 174px; display: flex; align-items: center; gap: 13px; white-space: nowrap; font-size: 17px; }
.lang { width: 49px; padding-left: 9px; font-size: 15px; }
.clock { width: 72px; display: flex; flex-direction: column; text-align: center; line-height: 23px; font-size: 15px; }
.tray .notices { width: 70px; border-right: 1px solid #6b7880; height: 50px; }
```
